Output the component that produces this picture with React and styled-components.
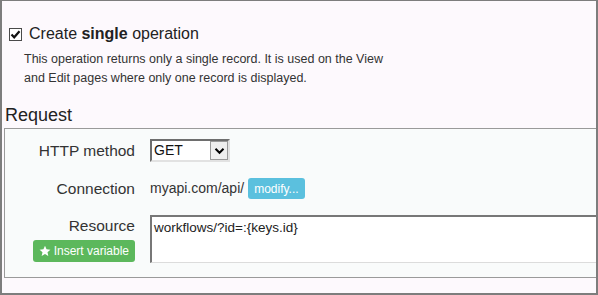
import React from "react";
import styled, { createGlobalStyle } from "styled-components";

const GlobalStyle = createGlobalStyle`
  html, body {
    margin: 0;
    padding: 0;
    background: #fdf9fd;
  }
  * {
    box-sizing: border-box;
  }
`;

function App() {
  return (
    <>
      <GlobalStyle />
      <Frame>
        <OptionRow>
          <CheckBox>
            <svg width="11" height="11" viewBox="0 0 11 11">
              <path
                d="M1.5 5.5 L4.2 8.3 L9.5 2.2"
                fill="none"
                stroke="#111"
                strokeWidth="2.2"
              />
            </svg>
          </CheckBox>
          <OptionTitle>
            Create <b>single</b> operation
          </OptionTitle>
        </OptionRow>
        <Description>
          This operation returns only a single record. It is used on the View
          <br />
          and Edit pages where only one record is displayed.
        </Description>

        <SectionTitle>Request</SectionTitle>
        <Panel>
          <FieldRow>
            <Label>HTTP method</Label>
            <Select>
              <SelectValue>GET</SelectValue>
              <SelectArrow>
                <svg width="11" height="8" viewBox="0 0 11 8">
                  <path
                    d="M1.5 1.8 L5.5 5.8 L9.5 1.8"
                    fill="none"
                    stroke="#000"
                    strokeWidth="2"
                  />
                </svg>
              </SelectArrow>
            </Select>
          </FieldRow>
          <FieldRow>
            <Label>Connection</Label>
            <Inline>
              <Value>myapi.com/api/</Value>
              <SmallButton color="#5bc0de">modify...</SmallButton>
            </Inline>
          </FieldRow>
          <FieldRow top>
            <LabelStack>
              <Label pad>Resource</Label>
              <SmallButton color="#5cb85c" tall>
                <svg width="12" height="12" viewBox="0 0 24 24">
                  <polygon
                    points="12,1.5 15.1,8.6 22.8,9.3 17,14.4 18.7,22 12,18 5.3,22 7,14.4 1.2,9.3 8.9,8.6"
                    fill="#fff"
                  />
                </svg>
                Insert variable
              </SmallButton>
            </LabelStack>
            <TextArea readOnly defaultValue="workflows/?id=:{keys.id}" />
          </FieldRow>
        </Panel>
      </Frame>
    </>
  );
}

export default App;

const Frame = styled.div`
  width: 598px;
  height: 295px;
  overflow: hidden;
  background: #fdf9fd;
  border: 2px solid #7d7d7d;
  border-top-width: 1px;
  padding: 23px 0 0 0;
  font-family: "Liberation Sans", Arial, sans-serif;
  color: #333;
`;

const OptionRow = styled.div`
  display: flex;
  align-items: center;
  height: 20px;
  padding-left: 7px;
  gap: 7px;
`;

const CheckBox = styled.span`
  display: inline-flex;
  align-items: center;
  justify-content: center;
  width: 13px;
  height: 13px;
  background: #fff;
  border: 1px solid #4a4a4a;
`;

const OptionTitle = styled.span`
  font-size: 16px;
  line-height: 20px;
  color: #222;
`;

const Description = styled.p`
  margin: 6px 0 0 22px;
  font-size: 12.5px;
  line-height: 19px;
  color: #333;
`;

const SectionTitle = styled.h3`
  margin: 17px 0 0 3px;
  font-size: 18px;
  line-height: 21px;
  font-weight: 400;
  color: #222;
`;

const Panel = styled.div`
  margin: 2px -20px 0 2px;
  padding: 10px 0 14px;
  background: #f9fbfb;
  border: 1px solid #9a9a9a;
  display: flex;
  flex-direction: column;
  gap: 16px;
`;

const FieldRow = styled.div`
  display: grid;
  grid-template-columns: 130px 1fr;
  column-gap: 15px;
  align-items: ${(props) => (props.top ? "start" : "center")};
`;

const LabelStack = styled.div`
  display: flex;
  flex-direction: column;
  align-items: flex-end;
  gap: 6px;
`;

const Label = styled.div`
  text-align: right;
  font-size: 15.5px;
  line-height: 17px;
  padding-top: ${(props) => (props.pad ? "2px" : "0")};
  color: #333;
`;

const Select = styled.div`
  display: flex;
  width: 80px;
  height: 23px;
  background: #fff;
  border-style: solid;
  border-width: 2px;
  border-color: #6e6e6e #e2e2e2 #e2e2e2 #6e6e6e;
`;

const SelectValue = styled.span`
  flex: 1;
  padding-left: 2px;
  font-size: 14px;
  line-height: 19px;
  color: #111;
`;

const SelectArrow = styled.span`
  display: flex;
  align-items: center;
  justify-content: center;
  width: 18px;
  height: 19px;
  background: #efefef;
  border: 1px solid #9a9a9a;
`;

const Inline = styled.div`
  display: flex;
  align-items: center;
  gap: 4px;
`;

const Value = styled.span`
  font-size: 14px;
  line-height: 17px;
  color: #333;
`;

const SmallButton = styled.span`
  display: inline-flex;
  align-items: center;
  gap: 3px;
  height: ${(props) => (props.tall ? "22px" : "21px")};
  padding: 0 6px;
  background: ${(props) => props.color};
  border-radius: 3px;
  color: #fff;
  font-size: 12px;
  line-height: 1;
  white-space: nowrap;
`;

const TextArea = styled.textarea`
  display: block;
  width: 100%;
  height: 48px;
  margin: 0;
  padding: 3px 2px;
  resize: none;
  background: #fff;
  border-style: solid;
  border-width: 2px 1px 1px 2px;
  border-color: #777 #dcdcdc #dcdcdc #777;
  font-family: "Liberation Sans", Arial, sans-serif;
  font-size: 13.5px;
  line-height: 16px;
  color: #222;
  outline: none;
`;
